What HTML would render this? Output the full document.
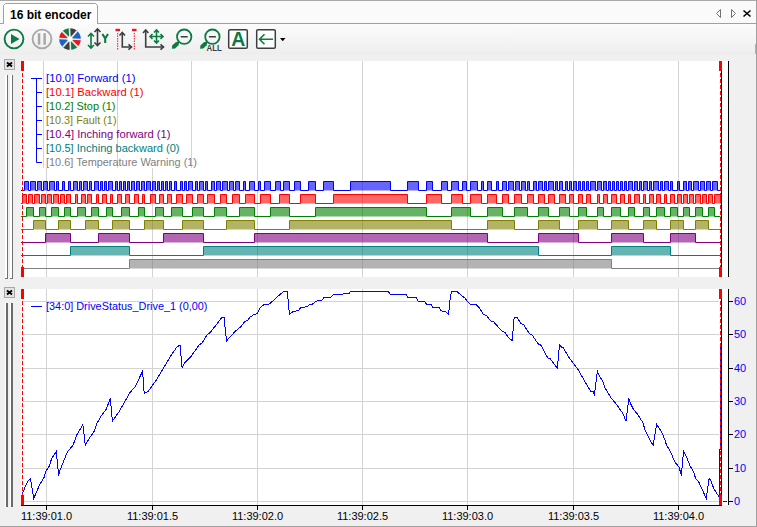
<!DOCTYPE html><html><head><meta charset="utf-8"><style>html,body{margin:0;padding:0;overflow:hidden;background:#f0f0f0}svg{display:block}</style></head><body><svg width="757" height="527" viewBox="0 0 757 527" font-family="Liberation Sans, sans-serif"><rect x="0" y="0" width="757" height="527" fill="#f0f0f0"/><rect x="0" y="0" width="757" height="24" fill="#fafafa"/><rect x="0" y="0" width="757" height="1" fill="#a9a9a9"/><rect x="0" y="23" width="757" height="1" fill="#a0a0a0"/><path d="M3.5 23.5 V5.5 L5.5 3.5 H95.5 L97.5 5.5 V23.5" fill="#ffffff" stroke="#a0a0a0" stroke-width="1"/><rect x="4" y="23" width="93" height="1" fill="#ffffff"/><text x="10" y="19" font-family="Liberation Sans" font-weight="bold" font-size="12" fill="#000">16 bit encoder</text><path d="M720.5 9.5 L716.5 13.5 L720.5 17.5 Z" fill="none" stroke="#707070" stroke-width="1"/><path d="M731.5 9.5 L735.5 13.5 L731.5 17.5 Z" fill="none" stroke="#707070" stroke-width="1"/><path d="M743.5 10.5 L750.5 16.5 M750.5 10.5 L743.5 16.5" stroke="#000" stroke-width="1.6"/><defs><linearGradient id="tb" x1="0" y1="0" x2="0" y2="1"><stop offset="0" stop-color="#fcfcfc"/><stop offset="1" stop-color="#ededed"/></linearGradient></defs><rect x="0" y="24" width="756" height="31" fill="url(#tb)"/><circle cx="14" cy="39" r="9.4" fill="none" stroke="#0e7a43" stroke-width="1.9"/><path d="M11 34 L19.5 39 L11 44 Z" fill="#0e7a43"/><circle cx="42" cy="39" r="9.4" fill="none" stroke="#a8a8a8" stroke-width="1.9"/><rect x="37.8" y="33.2" width="2.5" height="11.5" fill="#a8a8a8"/><rect x="43.4" y="33.2" width="2.5" height="11.5" fill="#a8a8a8"/><path d="M70.0 39.0 L70.00 28.20 A10.8 10.8 0 0 1 77.64 31.36 Z" fill="#3a3f3f"/><path d="M70.0 39.0 L77.64 31.36 A10.8 10.8 0 0 1 80.80 39.00 Z" fill="#1565c8"/><path d="M70.0 39.0 L80.80 39.00 A10.8 10.8 0 0 1 77.64 46.64 Z" fill="#e8181e"/><path d="M70.0 39.0 L77.64 46.64 A10.8 10.8 0 0 1 70.00 49.80 Z" fill="#147a45"/><path d="M70.0 39.0 L70.00 49.80 A10.8 10.8 0 0 1 62.36 46.64 Z" fill="#3a3f3f"/><path d="M70.0 39.0 L62.36 46.64 A10.8 10.8 0 0 1 59.20 39.00 Z" fill="#1565c8"/><path d="M70.0 39.0 L59.20 39.00 A10.8 10.8 0 0 1 62.36 31.36 Z" fill="#e8181e"/><path d="M70.0 39.0 L62.36 31.36 A10.8 10.8 0 0 1 70.00 28.20 Z" fill="#147a45"/><line x1="58.70" y1="38.50" x2="81.30" y2="39.50" stroke="#e6e6e6" stroke-width="1.6"/><line x1="61.86" y1="30.86" x2="78.14" y2="47.14" stroke="#e6e6e6" stroke-width="1.6"/><line x1="69.50" y1="27.70" x2="70.50" y2="50.30" stroke="#e6e6e6" stroke-width="1.6"/><line x1="77.14" y1="30.86" x2="62.86" y2="47.14" stroke="#e6e6e6" stroke-width="1.6"/><circle cx="70.0" cy="39.0" r="2.6" fill="#ffffff"/><path d="M91 34 V47.5 M88 36.5 L91 33.5 L94 36.5 M88 45.0 L91 48.0 L94 45.0" fill="none" stroke="#0e7a43" stroke-width="1.6"/><path d="M97.5 29.5 V45 M94.5 32.0 L97.5 29.0 L100.5 32.0 M94.5 42.5 L97.5 45.5 L100.5 42.5" fill="none" stroke="#3a3f3f" stroke-width="1.6"/><path d="M102.4 34 L105.2 38.6 L108 34 M105.2 38.6 V43" fill="none" stroke="#0e7a43" stroke-width="2.1"/><rect x="115.5" y="28.8" width="4.5" height="2.4" fill="#e8181e"/><rect x="132" y="28.8" width="4.5" height="2.4" fill="#e8181e"/><line x1="117.7" y1="33" x2="117.7" y2="50" stroke="#e8181e" stroke-width="1" stroke-dasharray="1.5 1"/><line x1="134.3" y1="33" x2="134.3" y2="50" stroke="#e8181e" stroke-width="1" stroke-dasharray="1.5 1"/><path d="M122.3 33 V47 H131" fill="none" stroke="#3a3f3f" stroke-width="1.6"/><path d="M119.5 35.5 L122.3 32.5 L125 35.5 M128.5 44.3 L131.5 47 L128.5 49.7" fill="none" stroke="#3a3f3f" stroke-width="1.6"/><path d="M145.7 30.5 V47 H163" fill="none" stroke="#3a3f3f" stroke-width="1.6"/><path d="M143 33 L145.7 30 L148.4 33 M160.5 44.3 L163.5 47 L160.5 49.7" fill="none" stroke="#3a3f3f" stroke-width="1.6"/><path d="M150 36.5 H163 M156.5 30 V43 M152.5 34 L150 36.5 L152.5 39 M160.5 34 L163 36.5 L160.5 39 M154 32.5 L156.5 30 L159 32.5 M154 40.5 L156.5 43 L159 40.5" fill="none" stroke="#0e7a43" stroke-width="1.6"/><circle cx="184.2" cy="36.7" r="7.2" fill="none" stroke="#0e7a43" stroke-width="1.8"/><rect x="180.7" y="36" width="7" height="1.5" fill="#3a3f3f"/><path d="M179.0 41.2 L175.7 42.2 L172.2 45.5 L171.89999999999998 48.8 L175.2 48.6 L178.39999999999998 45.2 L179.39999999999998 42 Z" fill="#0e7a43"/><circle cx="212.4" cy="36.7" r="7.2" fill="none" stroke="#0e7a43" stroke-width="1.8"/><rect x="208.9" y="36" width="7" height="1.5" fill="#3a3f3f"/><path d="M207.20000000000002 41.2 L203.9 42.2 L200.4 45.5 L200.1 48.8 L203.4 48.6 L206.6 45.2 L207.6 42 Z" fill="#0e7a43"/><text x="206.6" y="50.6" font-size="8.6" font-weight="bold" fill="#3a3f3f" textLength="15.2" lengthAdjust="spacingAndGlyphs">ALL</text><rect x="228.7" y="29.7" width="18.6" height="18.6" rx="1.3" fill="#ffffff" stroke="#3a3f3f" stroke-width="1.5"/><text x="238.2" y="46.2" font-size="19.5" font-weight="bold" text-anchor="middle" fill="#0e7a43">A</text><rect x="256.7" y="29.7" width="18.6" height="18.6" rx="1.3" fill="#ffffff" stroke="#3a3f3f" stroke-width="1.5"/><path d="M259.5 39.3 H273 M264.5 34.3 L259.5 39.3 L264.5 44.3" fill="none" stroke="#0e7a43" stroke-width="1.6"/><path d="M280 38 H285.5 L282.75 41.2 Z" fill="#000"/><rect x="756" y="0" width="1" height="527" fill="#a0a0a0"/><rect x="0" y="526" width="757" height="1" fill="#a0a0a0"/><rect x="755" y="44" width="1" height="10" fill="#b0b0b0"/><rect x="4.5" y="59.5" width="10" height="10" fill="#e3e3e3" stroke="#a8a8a8"/><path d="M7.0 62.5 L12.0 66.5 M12.0 62.5 L7.0 66.5" stroke="#000" stroke-width="1.8"/><rect x="5" y="75" width="2" height="203" fill="#ffffff"/><rect x="7" y="75" width="1" height="203" fill="#707070"/><rect x="10" y="75" width="2" height="203" fill="#ffffff"/><rect x="12" y="75" width="1" height="203" fill="#707070"/><rect x="5" y="278" width="3" height="1" fill="#707070"/><rect x="10" y="278" width="3" height="1" fill="#707070"/><rect x="21" y="61" width="708" height="216" fill="#ffffff"/><rect x="4.5" y="287.5" width="10" height="10" fill="#e3e3e3" stroke="#a8a8a8"/><path d="M7.0 290.5 L12.0 294.5 M12.0 290.5 L7.0 294.5" stroke="#000" stroke-width="1.8"/><rect x="5" y="303" width="1" height="204" fill="#ffffff"/><rect x="6" y="303" width="2" height="204" fill="#6a6a6a"/><rect x="10" y="303" width="1" height="204" fill="#ffffff"/><rect x="11" y="303" width="2" height="204" fill="#6a6a6a"/><rect x="21" y="289" width="708" height="216" fill="#ffffff"/><rect x="46" y="168" width="1" height="109" fill="#d3d3d3"/><rect x="152" y="168" width="1" height="109" fill="#d3d3d3"/><rect x="257" y="61" width="1" height="216" fill="#d3d3d3"/><rect x="362" y="61" width="1" height="216" fill="#d3d3d3"/><rect x="467" y="61" width="1" height="216" fill="#d3d3d3"/><rect x="573" y="61" width="1" height="216" fill="#d3d3d3"/><rect x="678" y="61" width="1" height="216" fill="#d3d3d3"/><rect x="43" y="61" width="1" height="107" fill="#d3d3d3"/><rect x="117" y="61" width="1" height="107" fill="#d3d3d3"/><rect x="191" y="61" width="1" height="107" fill="#d3d3d3"/><path d="M31 78.5 H42 M36.5 78.5 V162.5 M36.5 92.5 H42 M36.5 106.5 H42 M36.5 120.5 H42 M36.5 134.5 H42 M36.5 148.5 H42 M36.5 162.5 H42" stroke="#0000ff" stroke-width="1" fill="none"/><text x="46" y="82" font-size="11" fill="#0000ff" textLength="89.5" lengthAdjust="spacingAndGlyphs">[10.0] Forward (1)</text><text x="46" y="96" font-size="11" fill="#ff0000" textLength="97.5" lengthAdjust="spacingAndGlyphs">[10.1] Backward (1)</text><text x="46" y="110" font-size="11" fill="#008000" textLength="69.5" lengthAdjust="spacingAndGlyphs">[10.2] Stop (1)</text><text x="46" y="124" font-size="11" fill="#808000" textLength="70.5" lengthAdjust="spacingAndGlyphs">[10.3] Fault (1)</text><text x="46" y="138" font-size="11" fill="#800080" textLength="124.5" lengthAdjust="spacingAndGlyphs">[10.4] Inching forward (1)</text><text x="46" y="152" font-size="11" fill="#008080" textLength="133.5" lengthAdjust="spacingAndGlyphs">[10.5] Inching backward (0)</text><text x="46" y="166" font-size="11" fill="#808080" textLength="151" lengthAdjust="spacingAndGlyphs">[10.6] Temperature Warning (1)</text><rect x="46" y="289" width="1" height="216" fill="#d3d3d3"/><rect x="152" y="289" width="1" height="216" fill="#d3d3d3"/><rect x="257" y="289" width="1" height="216" fill="#d3d3d3"/><rect x="362" y="289" width="1" height="216" fill="#d3d3d3"/><rect x="467" y="289" width="1" height="216" fill="#d3d3d3"/><rect x="573" y="289" width="1" height="216" fill="#d3d3d3"/><rect x="678" y="289" width="1" height="216" fill="#d3d3d3"/><rect x="22" y="501" width="697" height="1" fill="#d3d3d3"/><rect x="22" y="468" width="697" height="1" fill="#d3d3d3"/><rect x="22" y="434" width="697" height="1" fill="#d3d3d3"/><rect x="22" y="401" width="697" height="1" fill="#d3d3d3"/><rect x="22" y="368" width="697" height="1" fill="#d3d3d3"/><rect x="22" y="334" width="697" height="1" fill="#d3d3d3"/><rect x="22" y="301" width="697" height="1" fill="#d3d3d3"/><path d="M31 306.5 H42" stroke="#0000ff" stroke-width="1"/><text x="46" y="310" font-size="11" fill="#0000ff" textLength="161.5" lengthAdjust="spacingAndGlyphs">[34:0] DriveStatus_Drive_1 (0,00)</text><rect x="21" y="505" width="701" height="1" fill="#000"/><rect x="46" y="505" width="1" height="5" fill="#000"/><rect x="152" y="505" width="1" height="5" fill="#000"/><rect x="257" y="505" width="1" height="5" fill="#000"/><rect x="362" y="505" width="1" height="5" fill="#000"/><rect x="467" y="505" width="1" height="5" fill="#000"/><rect x="573" y="505" width="1" height="5" fill="#000"/><rect x="678" y="505" width="1" height="5" fill="#000"/><text x="46.5" y="520" font-size="11" text-anchor="middle" fill="#000">11:39:01.0</text><text x="152.5" y="520" font-size="11" text-anchor="middle" fill="#000">11:39:01.5</text><text x="257.5" y="520" font-size="11" text-anchor="middle" fill="#000">11:39:02.0</text><text x="362.5" y="520" font-size="11" text-anchor="middle" fill="#000">11:39:02.5</text><text x="467.5" y="520" font-size="11" text-anchor="middle" fill="#000">11:39:03.0</text><text x="573.5" y="520" font-size="11" text-anchor="middle" fill="#000">11:39:03.5</text><text x="678.5" y="520" font-size="11" text-anchor="middle" fill="#000">11:39:04.0</text><rect x="728" y="289" width="1" height="216" fill="#000"/><rect x="728" y="501" width="5" height="1" fill="#000"/><text x="734" y="505" font-size="11" fill="#0000ff">0</text><rect x="728" y="468" width="5" height="1" fill="#000"/><text x="734" y="472" font-size="11" fill="#0000ff">10</text><rect x="728" y="434" width="5" height="1" fill="#000"/><text x="734" y="438" font-size="11" fill="#0000ff">20</text><rect x="728" y="401" width="5" height="1" fill="#000"/><text x="734" y="405" font-size="11" fill="#0000ff">30</text><rect x="728" y="368" width="5" height="1" fill="#000"/><text x="734" y="372" font-size="11" fill="#0000ff">40</text><rect x="728" y="334" width="5" height="1" fill="#000"/><text x="734" y="338" font-size="11" fill="#0000ff">50</text><rect x="728" y="301" width="5" height="1" fill="#000"/><text x="734" y="305" font-size="11" fill="#0000ff">60</text><rect x="723" y="501" width="4" height="1" fill="#0000ff"/><rect x="728" y="61" width="1" height="216" fill="#000"/><rect x="721" y="61" width="1" height="216" fill="#000"/><rect x="721" y="289" width="1" height="216" fill="#000"/><path d="M24.5 190.5 V181.5 H28.5 V190.5 Z M30.5 190.5 V181.5 H35.5 V190.5 Z M37.5 190.5 V181.5 H41.5 V190.5 Z M43.5 190.5 V181.5 H47.5 V190.5 Z M49.5 190.5 V181.5 H54.5 V190.5 Z M56.5 190.5 V181.5 H58.5 V190.5 Z M62.5 190.5 V181.5 H64.5 V190.5 Z M68.5 190.5 V181.5 H70.5 V190.5 Z M73.5 190.5 V181.5 H77.5 V190.5 Z M79.5 190.5 V181.5 H81.5 V190.5 Z M83.5 190.5 V181.5 H87.5 V190.5 Z M89.5 190.5 V181.5 H91.5 V190.5 Z M94.5 190.5 V181.5 H98.5 V190.5 Z M100.5 190.5 V181.5 H102.5 V190.5 Z M104.5 190.5 V181.5 H106.5 V190.5 Z M108.5 190.5 V181.5 H112.5 V190.5 Z M115.5 190.5 V181.5 H117.5 V190.5 Z M119.5 190.5 V181.5 H121.5 V190.5 Z M123.5 190.5 V181.5 H125.5 V190.5 Z M127.5 190.5 V181.5 H129.5 V190.5 Z M131.5 190.5 V181.5 H134.5 V190.5 Z M136.5 190.5 V181.5 H139.5 V190.5 Z M141.5 190.5 V181.5 H144.5 V190.5 Z M146.5 190.5 V181.5 H150.5 V190.5 Z M152.5 190.5 V181.5 H155.5 V190.5 Z M157.5 190.5 V181.5 H159.5 V190.5 Z M161.5 190.5 V181.5 H163.5 V190.5 Z M165.5 190.5 V181.5 H167.5 V190.5 Z M169.5 190.5 V181.5 H171.5 V190.5 Z M174.5 190.5 V181.5 H176.5 V190.5 Z M180.5 190.5 V181.5 H182.5 V190.5 Z M184.5 190.5 V181.5 H186.5 V190.5 Z M188.5 190.5 V181.5 H192.5 V190.5 Z M195.5 190.5 V181.5 H197.5 V190.5 Z M199.5 190.5 V181.5 H203.5 V190.5 Z M205.5 190.5 V181.5 H207.5 V190.5 Z M211.5 190.5 V181.5 H214.5 V190.5 Z M216.5 190.5 V181.5 H220.5 V190.5 Z M222.5 190.5 V181.5 H227.5 V190.5 Z M229.5 190.5 V181.5 H233.5 V190.5 Z M235.5 190.5 V181.5 H239.5 V190.5 Z M243.5 190.5 V181.5 H245.5 V190.5 Z M249.5 190.5 V181.5 H254.5 V190.5 Z M258.5 190.5 V181.5 H260.5 V190.5 Z M264.5 190.5 V181.5 H270.5 V190.5 Z M275.5 190.5 V181.5 H280.5 V190.5 Z M283.5 190.5 V181.5 H289.5 V190.5 Z M294.5 190.5 V181.5 H300.5 V190.5 Z M308.5 190.5 V181.5 H315.5 V190.5 Z M323.5 190.5 V181.5 H333.5 V190.5 Z M350.5 190.5 V181.5 H390.5 V190.5 Z M407.5 190.5 V181.5 H418.5 V190.5 Z M426.5 190.5 V181.5 H432.5 V190.5 Z M441.5 190.5 V181.5 H447.5 V190.5 Z M451.5 190.5 V181.5 H458.5 V190.5 Z M462.5 190.5 V181.5 H466.5 V190.5 Z M470.5 190.5 V181.5 H477.5 V190.5 Z M481.5 190.5 V181.5 H483.5 V190.5 Z M487.5 190.5 V181.5 H491.5 V190.5 Z M496.5 190.5 V181.5 H498.5 V190.5 Z M502.5 190.5 V181.5 H506.5 V190.5 Z M508.5 190.5 V181.5 H513.5 V190.5 Z M515.5 190.5 V181.5 H519.5 V190.5 Z M521.5 190.5 V181.5 H525.5 V190.5 Z M527.5 190.5 V181.5 H529.5 V190.5 Z M533.5 190.5 V181.5 H536.5 V190.5 Z M538.5 190.5 V181.5 H542.5 V190.5 Z M544.5 190.5 V181.5 H546.5 V190.5 Z M548.5 190.5 V181.5 H553.5 V190.5 Z M555.5 190.5 V181.5 H557.5 V190.5 Z M559.5 190.5 V181.5 H562.5 V190.5 Z M565.5 190.5 V181.5 H567.5 V190.5 Z M569.5 190.5 V181.5 H571.5 V190.5 Z M573.5 190.5 V181.5 H576.5 V190.5 Z M578.5 190.5 V181.5 H580.5 V190.5 Z M582.5 190.5 V181.5 H584.5 V190.5 Z M586.5 190.5 V181.5 H588.5 V190.5 Z M590.5 190.5 V181.5 H595.5 V190.5 Z M597.5 190.5 V181.5 H601.5 V190.5 Z M603.5 190.5 V181.5 H606.5 V190.5 Z M608.5 190.5 V181.5 H610.5 V190.5 Z M612.5 190.5 V181.5 H614.5 V190.5 Z M616.5 190.5 V181.5 H618.5 V190.5 Z M620.5 190.5 V181.5 H622.5 V190.5 Z M624.5 190.5 V181.5 H626.5 V190.5 Z M628.5 190.5 V181.5 H632.5 V190.5 Z M634.5 190.5 V181.5 H637.5 V190.5 Z M639.5 190.5 V181.5 H641.5 V190.5 Z M643.5 190.5 V181.5 H647.5 V190.5 Z M649.5 190.5 V181.5 H651.5 V190.5 Z M653.5 190.5 V181.5 H658.5 V190.5 Z M660.5 190.5 V181.5 H662.5 V190.5 Z M664.5 190.5 V181.5 H668.5 V190.5 Z M670.5 190.5 V181.5 H672.5 V190.5 Z M677.5 190.5 V181.5 H679.5 V190.5 Z M683.5 190.5 V181.5 H686.5 V190.5 Z M688.5 190.5 V181.5 H691.5 V190.5 Z M693.5 190.5 V181.5 H698.5 V190.5 Z M700.5 190.5 V181.5 H704.5 V190.5 Z M706.5 190.5 V181.5 H710.5 V190.5 Z M712.5 190.5 V181.5 H717.5 V190.5 Z " fill="#0000ff" fill-opacity="0.6" stroke="none"/><path d="M21.0 190.5 L24.5 190.5 L24.5 181.5 L28.5 181.5 L28.5 190.5 L30.5 190.5 L30.5 181.5 L35.5 181.5 L35.5 190.5 L37.5 190.5 L37.5 181.5 L41.5 181.5 L41.5 190.5 L43.5 190.5 L43.5 181.5 L47.5 181.5 L47.5 190.5 L49.5 190.5 L49.5 181.5 L54.5 181.5 L54.5 190.5 L56.5 190.5 L56.5 181.5 L58.5 181.5 L58.5 190.5 L62.5 190.5 L62.5 181.5 L64.5 181.5 L64.5 190.5 L68.5 190.5 L68.5 181.5 L70.5 181.5 L70.5 190.5 L73.5 190.5 L73.5 181.5 L77.5 181.5 L77.5 190.5 L79.5 190.5 L79.5 181.5 L81.5 181.5 L81.5 190.5 L83.5 190.5 L83.5 181.5 L87.5 181.5 L87.5 190.5 L89.5 190.5 L89.5 181.5 L91.5 181.5 L91.5 190.5 L94.5 190.5 L94.5 181.5 L98.5 181.5 L98.5 190.5 L100.5 190.5 L100.5 181.5 L102.5 181.5 L102.5 190.5 L104.5 190.5 L104.5 181.5 L106.5 181.5 L106.5 190.5 L108.5 190.5 L108.5 181.5 L112.5 181.5 L112.5 190.5 L115.5 190.5 L115.5 181.5 L117.5 181.5 L117.5 190.5 L119.5 190.5 L119.5 181.5 L121.5 181.5 L121.5 190.5 L123.5 190.5 L123.5 181.5 L125.5 181.5 L125.5 190.5 L127.5 190.5 L127.5 181.5 L129.5 181.5 L129.5 190.5 L131.5 190.5 L131.5 181.5 L134.5 181.5 L134.5 190.5 L136.5 190.5 L136.5 181.5 L139.5 181.5 L139.5 190.5 L141.5 190.5 L141.5 181.5 L144.5 181.5 L144.5 190.5 L146.5 190.5 L146.5 181.5 L150.5 181.5 L150.5 190.5 L152.5 190.5 L152.5 181.5 L155.5 181.5 L155.5 190.5 L157.5 190.5 L157.5 181.5 L159.5 181.5 L159.5 190.5 L161.5 190.5 L161.5 181.5 L163.5 181.5 L163.5 190.5 L165.5 190.5 L165.5 181.5 L167.5 181.5 L167.5 190.5 L169.5 190.5 L169.5 181.5 L171.5 181.5 L171.5 190.5 L174.5 190.5 L174.5 181.5 L176.5 181.5 L176.5 190.5 L180.5 190.5 L180.5 181.5 L182.5 181.5 L182.5 190.5 L184.5 190.5 L184.5 181.5 L186.5 181.5 L186.5 190.5 L188.5 190.5 L188.5 181.5 L192.5 181.5 L192.5 190.5 L195.5 190.5 L195.5 181.5 L197.5 181.5 L197.5 190.5 L199.5 190.5 L199.5 181.5 L203.5 181.5 L203.5 190.5 L205.5 190.5 L205.5 181.5 L207.5 181.5 L207.5 190.5 L211.5 190.5 L211.5 181.5 L214.5 181.5 L214.5 190.5 L216.5 190.5 L216.5 181.5 L220.5 181.5 L220.5 190.5 L222.5 190.5 L222.5 181.5 L227.5 181.5 L227.5 190.5 L229.5 190.5 L229.5 181.5 L233.5 181.5 L233.5 190.5 L235.5 190.5 L235.5 181.5 L239.5 181.5 L239.5 190.5 L243.5 190.5 L243.5 181.5 L245.5 181.5 L245.5 190.5 L249.5 190.5 L249.5 181.5 L254.5 181.5 L254.5 190.5 L258.5 190.5 L258.5 181.5 L260.5 181.5 L260.5 190.5 L264.5 190.5 L264.5 181.5 L270.5 181.5 L270.5 190.5 L275.5 190.5 L275.5 181.5 L280.5 181.5 L280.5 190.5 L283.5 190.5 L283.5 181.5 L289.5 181.5 L289.5 190.5 L294.5 190.5 L294.5 181.5 L300.5 181.5 L300.5 190.5 L308.5 190.5 L308.5 181.5 L315.5 181.5 L315.5 190.5 L323.5 190.5 L323.5 181.5 L333.5 181.5 L333.5 190.5 L350.5 190.5 L350.5 181.5 L390.5 181.5 L390.5 190.5 L407.5 190.5 L407.5 181.5 L418.5 181.5 L418.5 190.5 L426.5 190.5 L426.5 181.5 L432.5 181.5 L432.5 190.5 L441.5 190.5 L441.5 181.5 L447.5 181.5 L447.5 190.5 L451.5 190.5 L451.5 181.5 L458.5 181.5 L458.5 190.5 L462.5 190.5 L462.5 181.5 L466.5 181.5 L466.5 190.5 L470.5 190.5 L470.5 181.5 L477.5 181.5 L477.5 190.5 L481.5 190.5 L481.5 181.5 L483.5 181.5 L483.5 190.5 L487.5 190.5 L487.5 181.5 L491.5 181.5 L491.5 190.5 L496.5 190.5 L496.5 181.5 L498.5 181.5 L498.5 190.5 L502.5 190.5 L502.5 181.5 L506.5 181.5 L506.5 190.5 L508.5 190.5 L508.5 181.5 L513.5 181.5 L513.5 190.5 L515.5 190.5 L515.5 181.5 L519.5 181.5 L519.5 190.5 L521.5 190.5 L521.5 181.5 L525.5 181.5 L525.5 190.5 L527.5 190.5 L527.5 181.5 L529.5 181.5 L529.5 190.5 L533.5 190.5 L533.5 181.5 L536.5 181.5 L536.5 190.5 L538.5 190.5 L538.5 181.5 L542.5 181.5 L542.5 190.5 L544.5 190.5 L544.5 181.5 L546.5 181.5 L546.5 190.5 L548.5 190.5 L548.5 181.5 L553.5 181.5 L553.5 190.5 L555.5 190.5 L555.5 181.5 L557.5 181.5 L557.5 190.5 L559.5 190.5 L559.5 181.5 L562.5 181.5 L562.5 190.5 L565.5 190.5 L565.5 181.5 L567.5 181.5 L567.5 190.5 L569.5 190.5 L569.5 181.5 L571.5 181.5 L571.5 190.5 L573.5 190.5 L573.5 181.5 L576.5 181.5 L576.5 190.5 L578.5 190.5 L578.5 181.5 L580.5 181.5 L580.5 190.5 L582.5 190.5 L582.5 181.5 L584.5 181.5 L584.5 190.5 L586.5 190.5 L586.5 181.5 L588.5 181.5 L588.5 190.5 L590.5 190.5 L590.5 181.5 L595.5 181.5 L595.5 190.5 L597.5 190.5 L597.5 181.5 L601.5 181.5 L601.5 190.5 L603.5 190.5 L603.5 181.5 L606.5 181.5 L606.5 190.5 L608.5 190.5 L608.5 181.5 L610.5 181.5 L610.5 190.5 L612.5 190.5 L612.5 181.5 L614.5 181.5 L614.5 190.5 L616.5 190.5 L616.5 181.5 L618.5 181.5 L618.5 190.5 L620.5 190.5 L620.5 181.5 L622.5 181.5 L622.5 190.5 L624.5 190.5 L624.5 181.5 L626.5 181.5 L626.5 190.5 L628.5 190.5 L628.5 181.5 L632.5 181.5 L632.5 190.5 L634.5 190.5 L634.5 181.5 L637.5 181.5 L637.5 190.5 L639.5 190.5 L639.5 181.5 L641.5 181.5 L641.5 190.5 L643.5 190.5 L643.5 181.5 L647.5 181.5 L647.5 190.5 L649.5 190.5 L649.5 181.5 L651.5 181.5 L651.5 190.5 L653.5 190.5 L653.5 181.5 L658.5 181.5 L658.5 190.5 L660.5 190.5 L660.5 181.5 L662.5 181.5 L662.5 190.5 L664.5 190.5 L664.5 181.5 L668.5 181.5 L668.5 190.5 L670.5 190.5 L670.5 181.5 L672.5 181.5 L672.5 190.5 L677.5 190.5 L677.5 181.5 L679.5 181.5 L679.5 190.5 L683.5 190.5 L683.5 181.5 L686.5 181.5 L686.5 190.5 L688.5 190.5 L688.5 181.5 L691.5 181.5 L691.5 190.5 L693.5 190.5 L693.5 181.5 L698.5 181.5 L698.5 190.5 L700.5 190.5 L700.5 181.5 L704.5 181.5 L704.5 190.5 L706.5 190.5 L706.5 181.5 L710.5 181.5 L710.5 190.5 L712.5 190.5 L712.5 181.5 L717.5 181.5 L717.5 190.5 L720.5 190.5" fill="none" stroke="#0000ff" stroke-width="1" stroke-linejoin="miter"/><path d="M22.5 203.5 V194.5 H26.5 V203.5 Z M28.5 203.5 V194.5 H32.5 V203.5 Z M34.5 203.5 V194.5 H39.5 V203.5 Z M41.5 203.5 V194.5 H45.5 V203.5 Z M47.5 203.5 V194.5 H51.5 V203.5 Z M53.5 203.5 V194.5 H58.5 V203.5 Z M60.5 203.5 V194.5 H64.5 V203.5 Z M66.5 203.5 V194.5 H70.5 V203.5 Z M75.5 203.5 V194.5 H77.5 V203.5 Z M81.5 203.5 V194.5 H85.5 V203.5 Z M87.5 203.5 V194.5 H91.5 V203.5 Z M96.5 203.5 V194.5 H98.5 V203.5 Z M102.5 203.5 V194.5 H106.5 V203.5 Z M110.5 203.5 V194.5 H112.5 V203.5 Z M117.5 203.5 V194.5 H121.5 V203.5 Z M125.5 203.5 V194.5 H129.5 V203.5 Z M134.5 203.5 V194.5 H138.5 V203.5 Z M142.5 203.5 V194.5 H144.5 V203.5 Z M150.5 203.5 V194.5 H155.5 V203.5 Z M159.5 203.5 V194.5 H163.5 V203.5 Z M167.5 203.5 V194.5 H171.5 V203.5 Z M176.5 203.5 V194.5 H182.5 V203.5 Z M186.5 203.5 V194.5 H192.5 V203.5 Z M197.5 203.5 V194.5 H203.5 V203.5 Z M207.5 203.5 V194.5 H214.5 V203.5 Z M220.5 203.5 V194.5 H226.5 V203.5 Z M232.5 203.5 V194.5 H239.5 V203.5 Z M245.5 203.5 V194.5 H254.5 V203.5 Z M260.5 203.5 V194.5 H270.5 V203.5 Z M279.5 203.5 V194.5 H289.5 V203.5 Z M300.5 203.5 V194.5 H315.5 V203.5 Z M333.5 203.5 V194.5 H407.5 V203.5 Z M426.5 203.5 V194.5 H441.5 V203.5 Z M451.5 203.5 V194.5 H462.5 V203.5 Z M470.5 203.5 V194.5 H481.5 V203.5 Z M487.5 203.5 V194.5 H496.5 V203.5 Z M502.5 203.5 V194.5 H508.5 V203.5 Z M514.5 203.5 V194.5 H521.5 V203.5 Z M527.5 203.5 V194.5 H533.5 V203.5 Z M538.5 203.5 V194.5 H544.5 V203.5 Z M548.5 203.5 V194.5 H554.5 V203.5 Z M559.5 203.5 V194.5 H565.5 V203.5 Z M569.5 203.5 V194.5 H573.5 V203.5 Z M578.5 203.5 V194.5 H582.5 V203.5 Z M586.5 203.5 V194.5 H590.5 V203.5 Z M597.5 203.5 V194.5 H599.5 V203.5 Z M603.5 203.5 V194.5 H607.5 V203.5 Z M611.5 203.5 V194.5 H616.5 V203.5 Z M620.5 203.5 V194.5 H624.5 V203.5 Z M628.5 203.5 V194.5 H630.5 V203.5 Z M634.5 203.5 V194.5 H639.5 V203.5 Z M643.5 203.5 V194.5 H645.5 V203.5 Z M649.5 203.5 V194.5 H653.5 V203.5 Z M656.5 203.5 V194.5 H660.5 V203.5 Z M664.5 203.5 V194.5 H666.5 V203.5 Z M670.5 203.5 V194.5 H674.5 V203.5 Z M677.5 203.5 V194.5 H681.5 V203.5 Z M683.5 203.5 V194.5 H687.5 V203.5 Z M689.5 203.5 V194.5 H693.5 V203.5 Z M695.5 203.5 V194.5 H700.5 V203.5 Z M702.5 203.5 V194.5 H706.5 V203.5 Z M708.5 203.5 V194.5 H712.5 V203.5 Z M714.5 203.5 V194.5 H720.5 V203.5 Z " fill="#ff0000" fill-opacity="0.6" stroke="none"/><path d="M21.0 203.5 L22.5 203.5 L22.5 194.5 L26.5 194.5 L26.5 203.5 L28.5 203.5 L28.5 194.5 L32.5 194.5 L32.5 203.5 L34.5 203.5 L34.5 194.5 L39.5 194.5 L39.5 203.5 L41.5 203.5 L41.5 194.5 L45.5 194.5 L45.5 203.5 L47.5 203.5 L47.5 194.5 L51.5 194.5 L51.5 203.5 L53.5 203.5 L53.5 194.5 L58.5 194.5 L58.5 203.5 L60.5 203.5 L60.5 194.5 L64.5 194.5 L64.5 203.5 L66.5 203.5 L66.5 194.5 L70.5 194.5 L70.5 203.5 L75.5 203.5 L75.5 194.5 L77.5 194.5 L77.5 203.5 L81.5 203.5 L81.5 194.5 L85.5 194.5 L85.5 203.5 L87.5 203.5 L87.5 194.5 L91.5 194.5 L91.5 203.5 L96.5 203.5 L96.5 194.5 L98.5 194.5 L98.5 203.5 L102.5 203.5 L102.5 194.5 L106.5 194.5 L106.5 203.5 L110.5 203.5 L110.5 194.5 L112.5 194.5 L112.5 203.5 L117.5 203.5 L117.5 194.5 L121.5 194.5 L121.5 203.5 L125.5 203.5 L125.5 194.5 L129.5 194.5 L129.5 203.5 L134.5 203.5 L134.5 194.5 L138.5 194.5 L138.5 203.5 L142.5 203.5 L142.5 194.5 L144.5 194.5 L144.5 203.5 L150.5 203.5 L150.5 194.5 L155.5 194.5 L155.5 203.5 L159.5 203.5 L159.5 194.5 L163.5 194.5 L163.5 203.5 L167.5 203.5 L167.5 194.5 L171.5 194.5 L171.5 203.5 L176.5 203.5 L176.5 194.5 L182.5 194.5 L182.5 203.5 L186.5 203.5 L186.5 194.5 L192.5 194.5 L192.5 203.5 L197.5 203.5 L197.5 194.5 L203.5 194.5 L203.5 203.5 L207.5 203.5 L207.5 194.5 L214.5 194.5 L214.5 203.5 L220.5 203.5 L220.5 194.5 L226.5 194.5 L226.5 203.5 L232.5 203.5 L232.5 194.5 L239.5 194.5 L239.5 203.5 L245.5 203.5 L245.5 194.5 L254.5 194.5 L254.5 203.5 L260.5 203.5 L260.5 194.5 L270.5 194.5 L270.5 203.5 L279.5 203.5 L279.5 194.5 L289.5 194.5 L289.5 203.5 L300.5 203.5 L300.5 194.5 L315.5 194.5 L315.5 203.5 L333.5 203.5 L333.5 194.5 L407.5 194.5 L407.5 203.5 L426.5 203.5 L426.5 194.5 L441.5 194.5 L441.5 203.5 L451.5 203.5 L451.5 194.5 L462.5 194.5 L462.5 203.5 L470.5 203.5 L470.5 194.5 L481.5 194.5 L481.5 203.5 L487.5 203.5 L487.5 194.5 L496.5 194.5 L496.5 203.5 L502.5 203.5 L502.5 194.5 L508.5 194.5 L508.5 203.5 L514.5 203.5 L514.5 194.5 L521.5 194.5 L521.5 203.5 L527.5 203.5 L527.5 194.5 L533.5 194.5 L533.5 203.5 L538.5 203.5 L538.5 194.5 L544.5 194.5 L544.5 203.5 L548.5 203.5 L548.5 194.5 L554.5 194.5 L554.5 203.5 L559.5 203.5 L559.5 194.5 L565.5 194.5 L565.5 203.5 L569.5 203.5 L569.5 194.5 L573.5 194.5 L573.5 203.5 L578.5 203.5 L578.5 194.5 L582.5 194.5 L582.5 203.5 L586.5 203.5 L586.5 194.5 L590.5 194.5 L590.5 203.5 L597.5 203.5 L597.5 194.5 L599.5 194.5 L599.5 203.5 L603.5 203.5 L603.5 194.5 L607.5 194.5 L607.5 203.5 L611.5 203.5 L611.5 194.5 L616.5 194.5 L616.5 203.5 L620.5 203.5 L620.5 194.5 L624.5 194.5 L624.5 203.5 L628.5 203.5 L628.5 194.5 L630.5 194.5 L630.5 203.5 L634.5 203.5 L634.5 194.5 L639.5 194.5 L639.5 203.5 L643.5 203.5 L643.5 194.5 L645.5 194.5 L645.5 203.5 L649.5 203.5 L649.5 194.5 L653.5 194.5 L653.5 203.5 L656.5 203.5 L656.5 194.5 L660.5 194.5 L660.5 203.5 L664.5 203.5 L664.5 194.5 L666.5 194.5 L666.5 203.5 L670.5 203.5 L670.5 194.5 L674.5 194.5 L674.5 203.5 L677.5 203.5 L677.5 194.5 L681.5 194.5 L681.5 203.5 L683.5 203.5 L683.5 194.5 L687.5 194.5 L687.5 203.5 L689.5 203.5 L689.5 194.5 L693.5 194.5 L693.5 203.5 L695.5 203.5 L695.5 194.5 L700.5 194.5 L700.5 203.5 L702.5 203.5 L702.5 194.5 L706.5 194.5 L706.5 203.5 L708.5 203.5 L708.5 194.5 L712.5 194.5 L712.5 203.5 L714.5 203.5 L714.5 194.5 L720.5 194.5 L720.5 203.5 L720.5 203.5" fill="none" stroke="#ff0000" stroke-width="1" stroke-linejoin="miter"/><path d="M26.5 216.5 V207.5 H33.5 V216.5 Z M39.5 216.5 V207.5 H45.5 V216.5 Z M51.5 216.5 V207.5 H58.5 V216.5 Z M64.5 216.5 V207.5 H70.5 V216.5 Z M77.5 216.5 V207.5 H85.5 V216.5 Z M91.5 216.5 V207.5 H98.5 V216.5 Z M106.5 216.5 V207.5 H112.5 V216.5 Z M121.5 216.5 V207.5 H129.5 V216.5 Z M138.5 216.5 V207.5 H144.5 V216.5 Z M155.5 216.5 V207.5 H163.5 V216.5 Z M171.5 216.5 V207.5 H182.5 V216.5 Z M192.5 216.5 V207.5 H203.5 V216.5 Z M214.5 216.5 V207.5 H226.5 V216.5 Z M239.5 216.5 V207.5 H254.5 V216.5 Z M270.5 216.5 V207.5 H289.5 V216.5 Z M315.5 216.5 V207.5 H426.5 V216.5 Z M451.5 216.5 V207.5 H470.5 V216.5 Z M487.5 216.5 V207.5 H502.5 V216.5 Z M514.5 216.5 V207.5 H527.5 V216.5 Z M538.5 216.5 V207.5 H548.5 V216.5 Z M559.5 216.5 V207.5 H569.5 V216.5 Z M578.5 216.5 V207.5 H586.5 V216.5 Z M597.5 216.5 V207.5 H603.5 V216.5 Z M611.5 216.5 V207.5 H620.5 V216.5 Z M628.5 216.5 V207.5 H634.5 V216.5 Z M643.5 216.5 V207.5 H649.5 V216.5 Z M656.5 216.5 V207.5 H664.5 V216.5 Z M670.5 216.5 V207.5 H677.5 V216.5 Z M683.5 216.5 V207.5 H689.5 V216.5 Z M695.5 216.5 V207.5 H702.5 V216.5 Z M708.5 216.5 V207.5 H714.5 V216.5 Z " fill="#008000" fill-opacity="0.6" stroke="none"/><path d="M21.0 216.5 L26.5 216.5 L26.5 207.5 L33.5 207.5 L33.5 216.5 L39.5 216.5 L39.5 207.5 L45.5 207.5 L45.5 216.5 L51.5 216.5 L51.5 207.5 L58.5 207.5 L58.5 216.5 L64.5 216.5 L64.5 207.5 L70.5 207.5 L70.5 216.5 L77.5 216.5 L77.5 207.5 L85.5 207.5 L85.5 216.5 L91.5 216.5 L91.5 207.5 L98.5 207.5 L98.5 216.5 L106.5 216.5 L106.5 207.5 L112.5 207.5 L112.5 216.5 L121.5 216.5 L121.5 207.5 L129.5 207.5 L129.5 216.5 L138.5 216.5 L138.5 207.5 L144.5 207.5 L144.5 216.5 L155.5 216.5 L155.5 207.5 L163.5 207.5 L163.5 216.5 L171.5 216.5 L171.5 207.5 L182.5 207.5 L182.5 216.5 L192.5 216.5 L192.5 207.5 L203.5 207.5 L203.5 216.5 L214.5 216.5 L214.5 207.5 L226.5 207.5 L226.5 216.5 L239.5 216.5 L239.5 207.5 L254.5 207.5 L254.5 216.5 L270.5 216.5 L270.5 207.5 L289.5 207.5 L289.5 216.5 L315.5 216.5 L315.5 207.5 L426.5 207.5 L426.5 216.5 L451.5 216.5 L451.5 207.5 L470.5 207.5 L470.5 216.5 L487.5 216.5 L487.5 207.5 L502.5 207.5 L502.5 216.5 L514.5 216.5 L514.5 207.5 L527.5 207.5 L527.5 216.5 L538.5 216.5 L538.5 207.5 L548.5 207.5 L548.5 216.5 L559.5 216.5 L559.5 207.5 L569.5 207.5 L569.5 216.5 L578.5 216.5 L578.5 207.5 L586.5 207.5 L586.5 216.5 L597.5 216.5 L597.5 207.5 L603.5 207.5 L603.5 216.5 L611.5 216.5 L611.5 207.5 L620.5 207.5 L620.5 216.5 L628.5 216.5 L628.5 207.5 L634.5 207.5 L634.5 216.5 L643.5 216.5 L643.5 207.5 L649.5 207.5 L649.5 216.5 L656.5 216.5 L656.5 207.5 L664.5 207.5 L664.5 216.5 L670.5 216.5 L670.5 207.5 L677.5 207.5 L677.5 216.5 L683.5 216.5 L683.5 207.5 L689.5 207.5 L689.5 216.5 L695.5 216.5 L695.5 207.5 L702.5 207.5 L702.5 216.5 L708.5 216.5 L708.5 207.5 L714.5 207.5 L714.5 216.5 L720.5 216.5" fill="none" stroke="#008000" stroke-width="1" stroke-linejoin="miter"/><path d="M33.5 229.5 V220.5 H45.5 V229.5 Z M58.5 229.5 V220.5 H70.5 V229.5 Z M85.5 229.5 V220.5 H98.5 V229.5 Z M112.5 229.5 V220.5 H129.5 V229.5 Z M144.5 229.5 V220.5 H163.5 V229.5 Z M182.5 229.5 V220.5 H203.5 V229.5 Z M226.5 229.5 V220.5 H254.5 V229.5 Z M289.5 229.5 V220.5 H451.5 V229.5 Z M487.5 229.5 V220.5 H514.5 V229.5 Z M538.5 229.5 V220.5 H559.5 V229.5 Z M578.5 229.5 V220.5 H597.5 V229.5 Z M611.5 229.5 V220.5 H628.5 V229.5 Z M643.5 229.5 V220.5 H656.5 V229.5 Z M670.5 229.5 V220.5 H683.5 V229.5 Z M695.5 229.5 V220.5 H708.5 V229.5 Z " fill="#808000" fill-opacity="0.6" stroke="none"/><path d="M21.0 229.5 L33.5 229.5 L33.5 220.5 L45.5 220.5 L45.5 229.5 L58.5 229.5 L58.5 220.5 L70.5 220.5 L70.5 229.5 L85.5 229.5 L85.5 220.5 L98.5 220.5 L98.5 229.5 L112.5 229.5 L112.5 220.5 L129.5 220.5 L129.5 229.5 L144.5 229.5 L144.5 220.5 L163.5 220.5 L163.5 229.5 L182.5 229.5 L182.5 220.5 L203.5 220.5 L203.5 229.5 L226.5 229.5 L226.5 220.5 L254.5 220.5 L254.5 229.5 L289.5 229.5 L289.5 220.5 L451.5 220.5 L451.5 229.5 L487.5 229.5 L487.5 220.5 L514.5 220.5 L514.5 229.5 L538.5 229.5 L538.5 220.5 L559.5 220.5 L559.5 229.5 L578.5 229.5 L578.5 220.5 L597.5 220.5 L597.5 229.5 L611.5 229.5 L611.5 220.5 L628.5 220.5 L628.5 229.5 L643.5 229.5 L643.5 220.5 L656.5 220.5 L656.5 229.5 L670.5 229.5 L670.5 220.5 L683.5 220.5 L683.5 229.5 L695.5 229.5 L695.5 220.5 L708.5 220.5 L708.5 229.5 L720.5 229.5" fill="none" stroke="#808000" stroke-width="1" stroke-linejoin="miter"/><path d="M45.5 242.5 V233.5 H70.5 V242.5 Z M98.5 242.5 V233.5 H129.5 V242.5 Z M163.5 242.5 V233.5 H203.5 V242.5 Z M254.5 242.5 V233.5 H487.5 V242.5 Z M538.5 242.5 V233.5 H578.5 V242.5 Z M611.5 242.5 V233.5 H643.5 V242.5 Z M670.5 242.5 V233.5 H695.5 V242.5 Z " fill="#800080" fill-opacity="0.6" stroke="none"/><path d="M21.0 242.5 L45.5 242.5 L45.5 233.5 L70.5 233.5 L70.5 242.5 L98.5 242.5 L98.5 233.5 L129.5 233.5 L129.5 242.5 L163.5 242.5 L163.5 233.5 L203.5 233.5 L203.5 242.5 L254.5 242.5 L254.5 233.5 L487.5 233.5 L487.5 242.5 L538.5 242.5 L538.5 233.5 L578.5 233.5 L578.5 242.5 L611.5 242.5 L611.5 233.5 L643.5 233.5 L643.5 242.5 L670.5 242.5 L670.5 233.5 L695.5 233.5 L695.5 242.5 L720.5 242.5" fill="none" stroke="#800080" stroke-width="1" stroke-linejoin="miter"/><path d="M70.5 255.5 V246.5 H129.5 V255.5 Z M203.5 255.5 V246.5 H538.5 V255.5 Z M611.5 255.5 V246.5 H670.5 V255.5 Z " fill="#008080" fill-opacity="0.6" stroke="none"/><path d="M21.0 255.5 L70.5 255.5 L70.5 246.5 L129.5 246.5 L129.5 255.5 L203.5 255.5 L203.5 246.5 L538.5 246.5 L538.5 255.5 L611.5 255.5 L611.5 246.5 L670.5 246.5 L670.5 255.5 L720.5 255.5" fill="none" stroke="#008080" stroke-width="1" stroke-linejoin="miter"/><path d="M129.5 268.5 V259.5 H611.5 V268.5 Z " fill="#808080" fill-opacity="0.6" stroke="none"/><path d="M21.0 268.5 L129.5 268.5 L129.5 259.5 L611.5 259.5 L611.5 268.5 L720.5 268.5" fill="none" stroke="#808080" stroke-width="1" stroke-linejoin="miter"/><polyline points="22.4,493.9 26.5,483.7 28.1,481 30.5,478.4 33.7,498.5 39.4,485.3 41.8,481.3 44.2,477.3 45.8,471.6 49.8,465.2 51.5,458.7 56.3,451.5 58.7,475.6 59.5,471.6 66.8,453.1 68.4,450.6 73.2,445 76.5,435.3 82.9,424.8 85.3,445 90.2,436.9 94.2,431.3 96.6,424 101.5,415.5 106.3,409 110.3,398.5 112.4,421.1 119.2,411.5 129.7,392.9 135.3,386.5 142.6,371.1 144.2,393.7 148.2,391.3 156.3,380 163.5,367.9 170.8,355.8 176.5,347.6 180,344.8 182.1,367.7 184.5,362.9 191,356.5 199,345.2 202.3,342.7 207.1,334.7 210.3,332.3 216.8,324.2 221.6,317.7 224,316.9 226.5,341.1 228.9,337.9 236.1,330.6 241,326.6 245,321.3 247.4,320.8 249.8,317.3 253.9,314.5 257.1,313.7 260.3,307.6 264.4,304.4 269.2,304 273.2,300.6 276.5,297.4 279.7,294.7 283.7,291.5 287.3,291.5 289.4,314.4 293.4,311.3 298.2,310.8 300.6,307.6 307.1,306.8 309.5,304.4 312.7,304 316,301.1 321.6,300.6 324,297.4 331.1,297 333.9,294.2 348.7,293.9 350.5,291.5 388.4,291.5 390.3,294.2 406,294.6 407.8,297.4 416.2,297.6 418,301.3 424.5,301.6 426.3,304 431,304.4 432.8,307.2 439.3,307.6 441.1,310.9 445.8,311.8 448.5,314.2 450.4,297 451.7,291.5 456.9,291.5 461.5,295.5 464.7,297.9 467.1,301.1 470.3,304.4 476,304.7 479.2,307.6 483.2,314 486.5,315.6 490.5,320.8 493.7,321.8 498.5,327.3 501.8,331 505,332.6 508.2,337.4 512.3,340.6 513.9,318.9 515,317.3 517.1,317.6 521.1,323.7 523.5,324.5 529.2,333.4 532.4,335.3 538.1,343.9 540.5,344.5 547.7,357.9 550.2,358.7 557.4,368.4 559.5,344.5 561.5,347.1 563.1,347.4 568.7,357.1 578.4,370 585.6,382.9 590.5,391 592.9,391 594.5,394.5 597.4,371.3 599.4,375.6 603.4,382.9 605,387.7 611.5,398.5 616.3,404.2 622.7,413.1 626,421.1 628.9,398.5 630.8,404.2 633.2,409 637.3,413.9 642.9,422.7 645.3,430.8 649.4,438.9 653.1,445.3 656.6,424.4 661.5,431.6 665,440 666.4,444.9 670,450.6 674.9,462 679.2,467.3 681.3,475.5 683.5,451.3 686.3,456.3 689.9,465.6 693.4,471.3 695.6,478.4 699.1,482.6 706.2,498.3 709.1,478.4 710.5,479.8 714,489 719,496.9 719.5,449 720.5,449 720.5,343" fill="none" stroke="#0000ff" stroke-width="1" shape-rendering="crispEdges"/><rect x="21" y="61" width="3" height="10" fill="#ff0000"/><rect x="21" y="267" width="3" height="10" fill="#ff0000"/><rect x="719" y="61" width="3" height="10" fill="#ff0000"/><rect x="719" y="267" width="3" height="10" fill="#ff0000"/><line x1="22.5" y1="73" x2="22.5" y2="267" stroke="#ff0000" stroke-width="1" stroke-dasharray="4 2"/><line x1="720.5" y1="73" x2="720.5" y2="267" stroke="#ff0000" stroke-width="1" stroke-dasharray="4 2"/><rect x="21" y="289" width="3" height="10" fill="#ff0000"/><rect x="21" y="495" width="3" height="10" fill="#ff0000"/><rect x="719" y="289" width="3" height="10" fill="#ff0000"/><rect x="719" y="495" width="3" height="10" fill="#ff0000"/><line x1="22.5" y1="301" x2="22.5" y2="495" stroke="#ff0000" stroke-width="1" stroke-dasharray="4 2"/><line x1="720.5" y1="301" x2="720.5" y2="495" stroke="#ff0000" stroke-width="1" stroke-dasharray="4 2"/></svg></body></html>
